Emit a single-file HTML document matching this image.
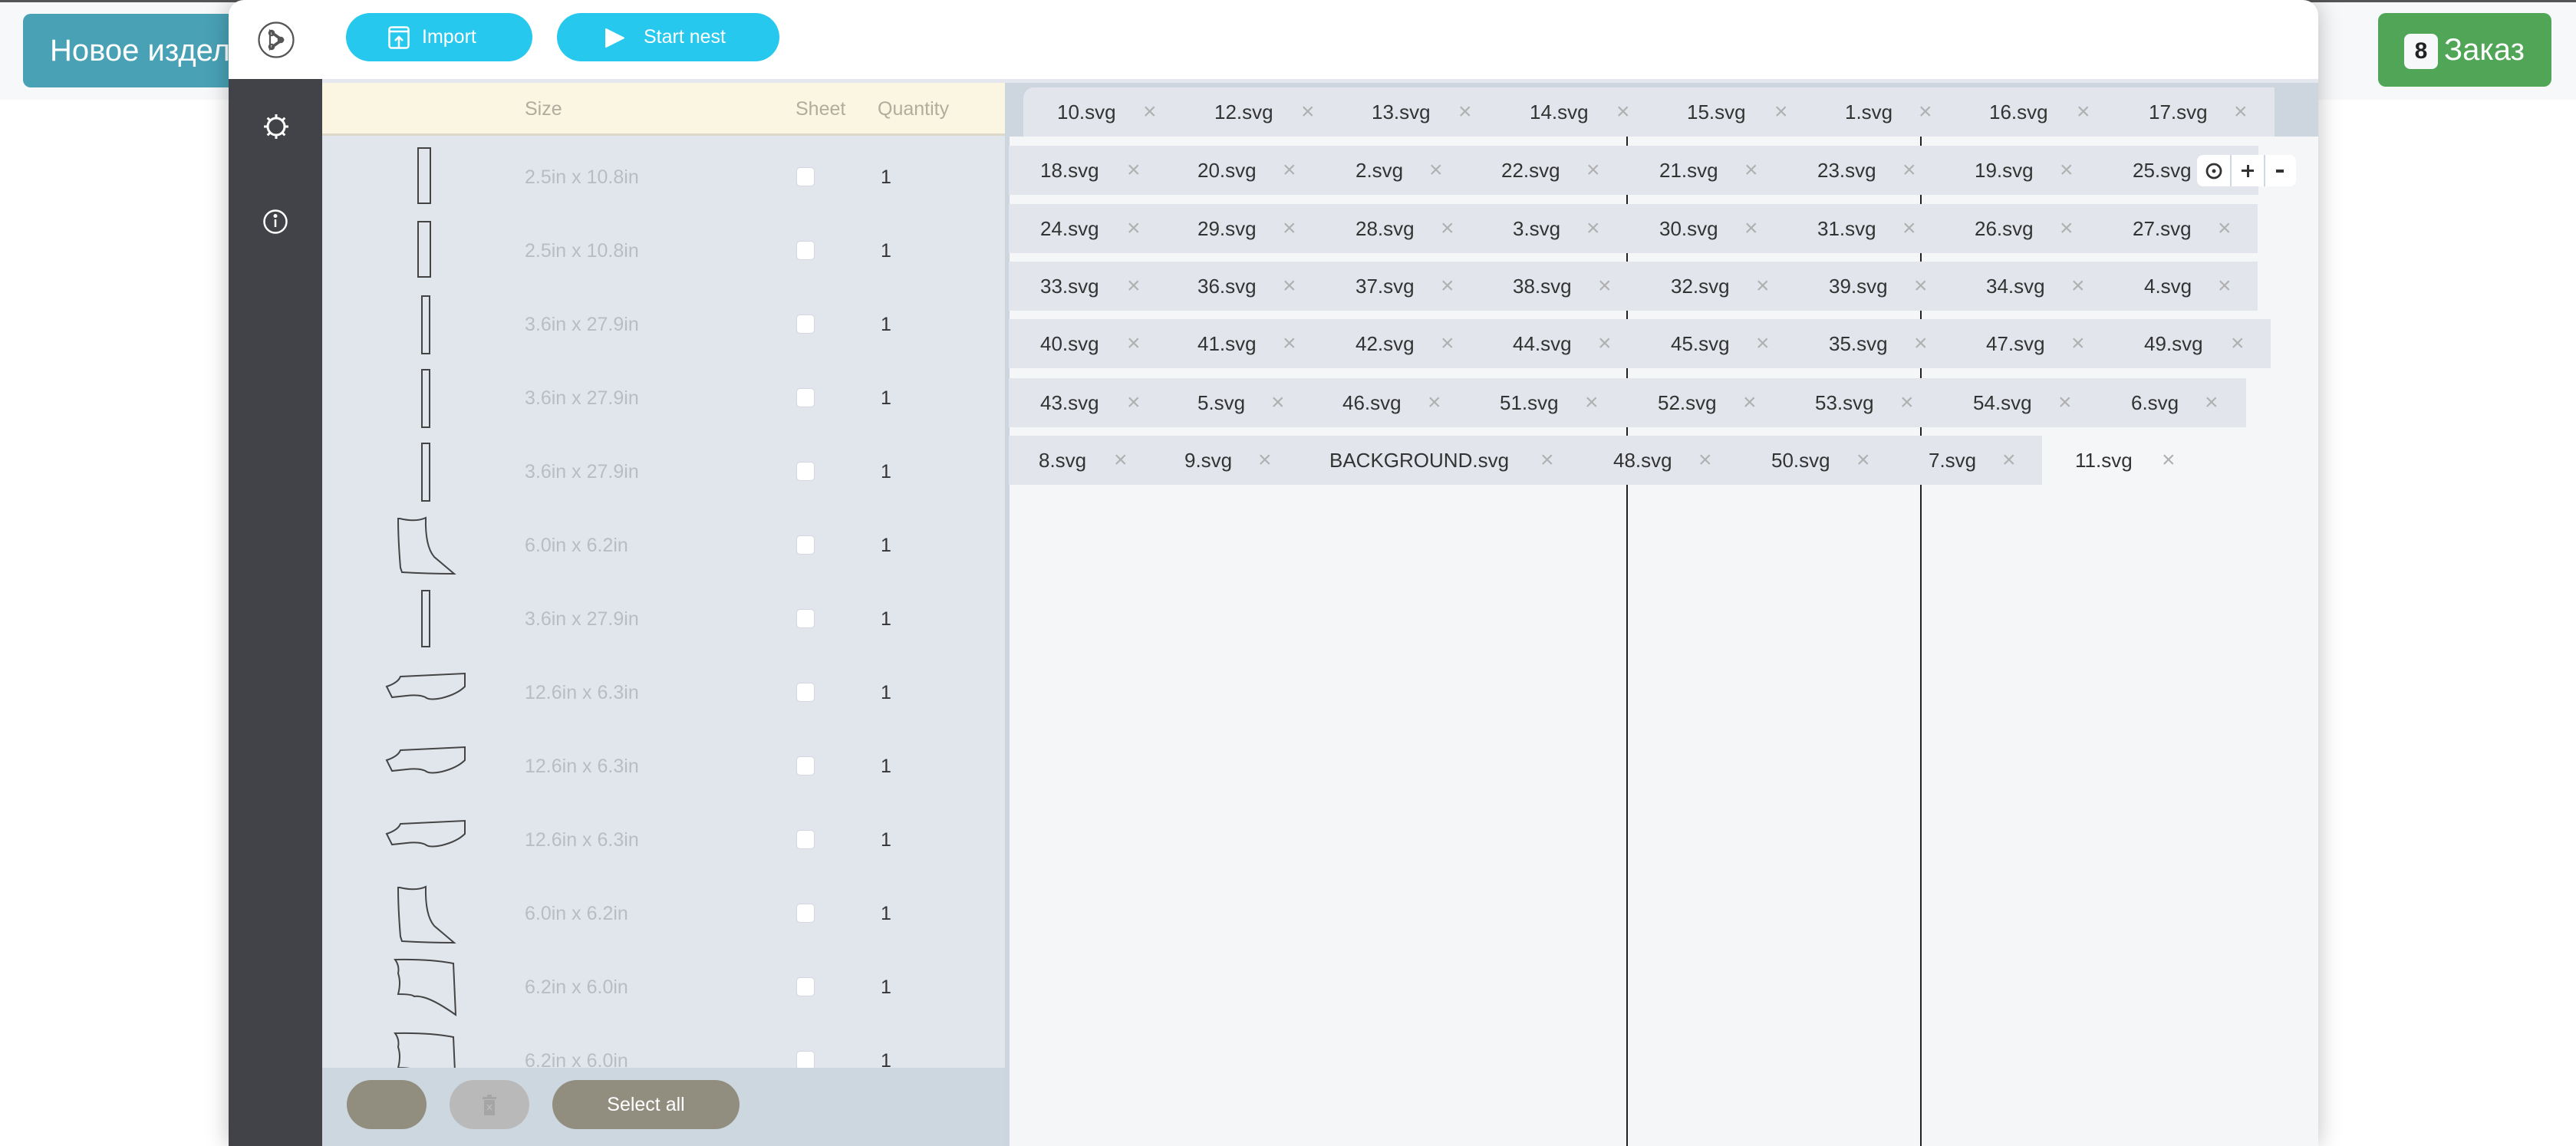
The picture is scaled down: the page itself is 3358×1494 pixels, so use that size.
<!DOCTYPE html>
<html><head><meta charset="utf-8">
<style>
*{margin:0;padding:0;box-sizing:border-box}
body{width:3358px;height:1494px;position:relative;overflow:hidden;background:#fff;font-family:"Liberation Sans","DejaVu Sans",sans-serif}
.a{position:absolute}
.topband{left:0;top:0;width:3358px;height:130px;background:#f7f8fa}
.topline{left:0;top:0;width:3358px;height:3px;background:#555}
.btnL{left:30px;top:18px;width:300px;height:96px;background:#49a1b5;border-radius:10px;color:#fff;font-size:40px;line-height:96px;padding-left:35px;white-space:nowrap}
.btnR{left:3100px;top:17px;width:226px;height:96px;background:#51a556;border-radius:10px}
.badge{left:3134px;top:44px;width:44px;height:46px;background:#f7f8fa;border-radius:8px;color:#222;font-weight:bold;font-size:30px;text-align:center;line-height:46px}
.zak{left:3186px;top:28px;color:#fff;font-size:40px;line-height:74px}
.modal{left:298px;top:0;width:2724px;height:1494px;background:#fff;border-radius:20px 20px 0 0;box-shadow:0 0 30px rgba(0,0,0,.25);overflow:hidden}
.side{left:0;top:103px;width:122px;height:1391px;background:#424349}
.btnB{background:#26c8ee;border-radius:32px;color:#fff;font-size:25px;line-height:63px;height:63px;top:17px}
.parts{left:122px;top:103px;width:890px;height:1391px;background:#e1e6ed;border-top:5px solid #e4e8ee}
.hdr{left:122px;top:108px;width:890px;height:69px;background:#faf6e2;border-bottom:3px solid #ddd8c8}
.h{color:#b0ad9e;font-size:25px;top:128px}
.sz{color:#b9bdc3;font-size:25px;left:386px;margin-top:3px}
.q{color:#333;font-size:25px;left:850px;margin-top:3px}
.cb{left:740px;width:24px;height:25px;background:#fff;border:1px solid #d4d7dc;border-radius:5px;margin-top:0px}
.bot{left:122px;top:1392px;width:890px;height:102px;background:#cdd7df}
.canvas{left:1012px;top:103px;width:1712px;height:1391px;background:#f4f6f8;border-left:6px solid #cdd6df}
.strip{left:1012px;top:103px;width:1712px;height:75px;background:#cdd6df;border-top:5px solid #e4e8ee}
.vl{width:2px;background:#222;top:178px;height:1316px}
.row{height:64px;background:#e2e6ec}
.t{font-size:26px;color:#333;line-height:64px;white-space:nowrap}
.x{font-size:30px;color:#b0b0b0;line-height:64px;font-weight:lighter}
</style></head><body>
<div class="a topband"></div>
<div class="a topline"></div>
<div class="a btnL">Новое изделие</div>
<div class="a btnR"></div>
<div class="a badge">8</div>
<div class="a zak">Заказ</div>

<div class="a modal">
  <svg class="a" style="left:37px;top:27px" width="50" height="50" viewBox="0 0 50 50" fill="none" stroke="#555" stroke-width="2.2">
    <circle cx="25" cy="25" r="22.5"/>
    <path d="M17 13 L34 25 L17 37 Z"/>
    <circle cx="19" cy="16" r="3.2"/><circle cx="19" cy="34" r="3.2"/><circle cx="31" cy="25" r="3.2"/>
    <path d="M19 16 L31 25 L19 34"/>
  </svg>
  <div class="a btnB" style="left:153px;width:243px">
    <svg class="a" style="left:55px;top:17px" width="28" height="30" viewBox="0 0 28 30" fill="none" stroke="#fff" stroke-width="2.5"><rect x="1.5" y="1.5" width="25" height="27" rx="3"/><path d="M1.5 7 H26.5"/><path d="M14 28 V15 M9 19 L14 14 L19 19"/></svg>
    <span class="a" style="left:99px">Import</span>
  </div>
  <div class="a btnB" style="left:428px;width:290px">
    <svg class="a" style="left:63px;top:20px" width="25" height="25" viewBox="0 0 25 25"><path d="M1 1 L24 12.5 L1 24 Z" fill="#fff" stroke="#fff" stroke-linejoin="round" stroke-width="2"/></svg>
    <span class="a" style="left:113px">Start nest</span>
  </div>

  <div class="a side">
    <svg class="a" style="left:44px;top:44px" width="36" height="36" viewBox="0 0 36 36" fill="none" stroke="#fff" stroke-width="3"><circle cx="18" cy="18" r="11"/><path d="M18 2v5M18 29v5M2 18h5M29 18h5M6.7 6.7l3.5 3.5M25.8 25.8l3.5 3.5M6.7 29.3l3.5-3.5M25.8 10.2l3.5-3.5"/></svg>
    <svg class="a" style="left:44px;top:169px" width="34" height="34" viewBox="0 0 34 34" fill="none" stroke="#fff" stroke-width="2.5"><circle cx="17" cy="17" r="14.5"/><path d="M17 14v10"/><circle cx="17" cy="9.5" r="1.3" fill="#fff"/></svg>
  </div>

  <div class="a parts"></div>
  <div class="a hdr"></div>
  <div class="a h" style="left:386px">Size</div>
  <div class="a h" style="left:739px">Sheet</div>
  <div class="a h" style="left:846px">Quantity</div>

  <svg class="a" style="left:0;top:0" width="1012" height="1494" fill="none" stroke="#444" stroke-width="2">
    <rect x="247" y="193" width="16" height="72"/>
    <rect x="247" y="289" width="16" height="72"/>
    <rect x="252" y="386" width="10" height="75"/>
    <rect x="252" y="482" width="10" height="75"/>
    <rect x="252" y="578" width="10" height="75"/>
    <path transform="translate(220,674)" d="M3,2 Q24,7 37,1 Q36,38 48,52 L74,74 Q40,74 6,72 L4,66 Q1,30 1,2 Z"/>
    <rect x="252" y="770" width="10" height="73"/>
    <path transform="translate(206,877)" d="M18,5 L102,1 L102,18 Q92,28 72,33 Q58,36 52,33 Q45,28 26,30 L7,32 L0,18 Q15,13 18,5 Z"/>
    <path transform="translate(206,973)" d="M18,5 L102,1 L102,18 Q92,28 72,33 Q58,36 52,33 Q45,28 26,30 L7,32 L0,18 Q15,13 18,5 Z"/>
    <path transform="translate(206,1069)" d="M18,5 L102,1 L102,18 Q92,28 72,33 Q58,36 52,33 Q45,28 26,30 L7,32 L0,18 Q15,13 18,5 Z"/>
    <path transform="translate(220,1155)" d="M3,2 Q24,7 37,1 Q36,38 48,52 L74,74 Q40,74 6,72 L4,66 Q1,30 1,2 Z"/>
    <path transform="translate(217,1251)" d="M0,0 Q45,-1 76,5 L79,72 Q55,55 40,50 Q30,47 25,48 Q22,45 4,45 Q8,30 4,18 Q6,8 0,0 Z"/>
    <path transform="translate(217,1347)" d="M0,0 Q45,-1 76,5 L79,72 Q55,55 40,50 Q30,47 25,48 Q22,45 4,45 Q8,30 4,18 Q6,8 0,0 Z"/>
  </svg>

  <div class="a sz" style="top:214px">2.5in x 10.8in</div><div class="a cb" style="top:218px"></div><div class="a q" style="top:214px">1</div>
  <div class="a sz" style="top:310px">2.5in x 10.8in</div><div class="a cb" style="top:314px"></div><div class="a q" style="top:310px">1</div>
  <div class="a sz" style="top:406px">3.6in x 27.9in</div><div class="a cb" style="top:410px"></div><div class="a q" style="top:406px">1</div>
  <div class="a sz" style="top:502px">3.6in x 27.9in</div><div class="a cb" style="top:506px"></div><div class="a q" style="top:502px">1</div>
  <div class="a sz" style="top:598px">3.6in x 27.9in</div><div class="a cb" style="top:602px"></div><div class="a q" style="top:598px">1</div>
  <div class="a sz" style="top:694px">6.0in x 6.2in</div><div class="a cb" style="top:698px"></div><div class="a q" style="top:694px">1</div>
  <div class="a sz" style="top:790px">3.6in x 27.9in</div><div class="a cb" style="top:794px"></div><div class="a q" style="top:790px">1</div>
  <div class="a sz" style="top:886px">12.6in x 6.3in</div><div class="a cb" style="top:890px"></div><div class="a q" style="top:886px">1</div>
  <div class="a sz" style="top:982px">12.6in x 6.3in</div><div class="a cb" style="top:986px"></div><div class="a q" style="top:982px">1</div>
  <div class="a sz" style="top:1078px">12.6in x 6.3in</div><div class="a cb" style="top:1082px"></div><div class="a q" style="top:1078px">1</div>
  <div class="a sz" style="top:1174px">6.0in x 6.2in</div><div class="a cb" style="top:1178px"></div><div class="a q" style="top:1174px">1</div>
  <div class="a sz" style="top:1270px">6.2in x 6.0in</div><div class="a cb" style="top:1274px"></div><div class="a q" style="top:1270px">1</div>
  <div class="a sz" style="top:1366px">6.2in x 6.0in</div><div class="a cb" style="top:1370px"></div><div class="a q" style="top:1366px">1</div>

  <div class="a bot">
    <div class="a" style="left:32px;top:16px;width:104px;height:64px;border-radius:32px;background:#918e80"></div>
    <div class="a" style="left:166px;top:16px;width:104px;height:64px;border-radius:32px;background:#b9b9b9">
      <svg class="a" style="left:42px;top:19px" width="20" height="27" viewBox="0 0 20 27"><rect x="1" y="3" width="18" height="3" fill="#a5a5a5"/><rect x="7" y="0" width="6" height="3" fill="#a5a5a5"/><rect x="3" y="7" width="14" height="20" fill="#a5a5a5"/><path d="M7 13l6 7M13 13l-6 7" stroke="#bbb" stroke-width="1.5"/></svg>
    </div>
    <div class="a" style="left:300px;top:16px;width:244px;height:64px;border-radius:32px;background:#918e80;color:#fff;font-size:25px;line-height:64px;text-align:center">Select all</div>
  </div>

  <div class="a canvas"></div>
  <div class="a strip"></div>
  <div class="a vl" style="left:1822px"></div>
  <div class="a vl" style="left:2205px"></div>
  <div class="a row" style="left:1036px;top:114px;width:1631px;border-radius:14px 0 0 0"></div>
  <div class="a row" style="left:1017px;top:190px;width:1629px"></div>
  <div class="a row" style="left:1017px;top:266px;width:1628px"></div>
  <div class="a row" style="left:1017px;top:341px;width:1628px"></div>
  <div class="a row" style="left:1017px;top:416px;width:1645px"></div>
  <div class="a row" style="left:1017px;top:493px;width:1613px"></div>
  <div class="a row" style="left:1017px;top:568px;width:1347px"></div>
</div>

<div class="a" style="left:0;top:114px">
<span class="a t" style="left:1378px">10.svg</span><span class="a x" style="left:1490px">×</span>
<span class="a t" style="left:1583px">12.svg</span><span class="a x" style="left:1696px">×</span>
<span class="a t" style="left:1788px">13.svg</span><span class="a x" style="left:1901px">×</span>
<span class="a t" style="left:1994px">14.svg</span><span class="a x" style="left:2107px">×</span>
<span class="a t" style="left:2199px">15.svg</span><span class="a x" style="left:2313px">×</span>
<span class="a t" style="left:2405px">1.svg</span><span class="a x" style="left:2501px">×</span>
<span class="a t" style="left:2593px">16.svg</span><span class="a x" style="left:2707px">×</span>
<span class="a t" style="left:2801px">17.svg</span><span class="a x" style="left:2912px">×</span>
</div>
<div class="a" style="left:0;top:190px">
<span class="a t" style="left:1356px">18.svg</span><span class="a x" style="left:1469px">×</span>
<span class="a t" style="left:1561px">20.svg</span><span class="a x" style="left:1672px">×</span>
<span class="a t" style="left:1767px">2.svg</span><span class="a x" style="left:1863px">×</span>
<span class="a t" style="left:1957px">22.svg</span><span class="a x" style="left:2068px">×</span>
<span class="a t" style="left:2163px">21.svg</span><span class="a x" style="left:2274px">×</span>
<span class="a t" style="left:2369px">23.svg</span><span class="a x" style="left:2480px">×</span>
<span class="a t" style="left:2574px">19.svg</span><span class="a x" style="left:2685px">×</span>
<span class="a t" style="left:2780px">25.svg</span>
</div>
<div class="a" style="left:0;top:266px">
<span class="a t" style="left:1356px">24.svg</span><span class="a x" style="left:1469px">×</span>
<span class="a t" style="left:1561px">29.svg</span><span class="a x" style="left:1672px">×</span>
<span class="a t" style="left:1767px">28.svg</span><span class="a x" style="left:1878px">×</span>
<span class="a t" style="left:1972px">3.svg</span><span class="a x" style="left:2068px">×</span>
<span class="a t" style="left:2163px">30.svg</span><span class="a x" style="left:2274px">×</span>
<span class="a t" style="left:2369px">31.svg</span><span class="a x" style="left:2480px">×</span>
<span class="a t" style="left:2574px">26.svg</span><span class="a x" style="left:2685px">×</span>
<span class="a t" style="left:2780px">27.svg</span><span class="a x" style="left:2891px">×</span>
</div>
<div class="a" style="left:0;top:341px">
<span class="a t" style="left:1356px">33.svg</span><span class="a x" style="left:1469px">×</span>
<span class="a t" style="left:1561px">36.svg</span><span class="a x" style="left:1672px">×</span>
<span class="a t" style="left:1767px">37.svg</span><span class="a x" style="left:1878px">×</span>
<span class="a t" style="left:1972px">38.svg</span><span class="a x" style="left:2083px">×</span>
<span class="a t" style="left:2178px">32.svg</span><span class="a x" style="left:2289px">×</span>
<span class="a t" style="left:2384px">39.svg</span><span class="a x" style="left:2495px">×</span>
<span class="a t" style="left:2589px">34.svg</span><span class="a x" style="left:2700px">×</span>
<span class="a t" style="left:2795px">4.svg</span><span class="a x" style="left:2891px">×</span>
</div>
<div class="a" style="left:0;top:416px">
<span class="a t" style="left:1356px">40.svg</span><span class="a x" style="left:1469px">×</span>
<span class="a t" style="left:1561px">41.svg</span><span class="a x" style="left:1672px">×</span>
<span class="a t" style="left:1767px">42.svg</span><span class="a x" style="left:1878px">×</span>
<span class="a t" style="left:1972px">44.svg</span><span class="a x" style="left:2083px">×</span>
<span class="a t" style="left:2178px">45.svg</span><span class="a x" style="left:2289px">×</span>
<span class="a t" style="left:2384px">35.svg</span><span class="a x" style="left:2495px">×</span>
<span class="a t" style="left:2589px">47.svg</span><span class="a x" style="left:2700px">×</span>
<span class="a t" style="left:2795px">49.svg</span><span class="a x" style="left:2908px">×</span>
</div>
<div class="a" style="left:0;top:493px">
<span class="a t" style="left:1356px">43.svg</span><span class="a x" style="left:1469px">×</span>
<span class="a t" style="left:1561px">5.svg</span><span class="a x" style="left:1657px">×</span>
<span class="a t" style="left:1750px">46.svg</span><span class="a x" style="left:1861px">×</span>
<span class="a t" style="left:1955px">51.svg</span><span class="a x" style="left:2066px">×</span>
<span class="a t" style="left:2161px">52.svg</span><span class="a x" style="left:2272px">×</span>
<span class="a t" style="left:2366px">53.svg</span><span class="a x" style="left:2477px">×</span>
<span class="a t" style="left:2572px">54.svg</span><span class="a x" style="left:2683px">×</span>
<span class="a t" style="left:2778px">6.svg</span><span class="a x" style="left:2874px">×</span>
</div>
<div class="a" style="left:0;top:568px">
<span class="a t" style="left:1354px">8.svg</span><span class="a x" style="left:1452px">×</span>
<span class="a t" style="left:1544px">9.svg</span><span class="a x" style="left:1640px">×</span>
<span class="a t" style="left:1733px">BACKGROUND.svg</span><span class="a x" style="left:2008px">×</span>
<span class="a t" style="left:2103px">48.svg</span><span class="a x" style="left:2214px">×</span>
<span class="a t" style="left:2309px">50.svg</span><span class="a x" style="left:2420px">×</span>
<span class="a t" style="left:2514px">7.svg</span><span class="a x" style="left:2610px">×</span>
<span class="a t" style="left:2705px">11.svg</span><span class="a x" style="left:2818px">×</span>
</div>

<div class="a" style="left:2864px;top:202px;width:129px;height:41px;background:#fff;border-radius:8px"></div>
<div class="a" style="left:2907px;top:202px;width:2px;height:41px;background:#cfd8e0"></div>
<div class="a" style="left:2951px;top:202px;width:2px;height:41px;background:#cfd8e0"></div>
<svg class="a" style="left:2874px;top:211px" width="24" height="24" viewBox="0 0 24 24" fill="none" stroke="#333" stroke-width="2.8"><circle cx="12" cy="12" r="9"/><circle cx="12" cy="12" r="2.5" fill="#333" stroke="none"/></svg>
<div class="a" style="left:2922px;top:221px;width:16px;height:3px;background:#333"></div>
<div class="a" style="left:2928.5px;top:215px;width:3px;height:16px;background:#333"></div>
<div class="a" style="left:2967px;top:221px;width:10px;height:4px;background:#333"></div>
</body></html>
